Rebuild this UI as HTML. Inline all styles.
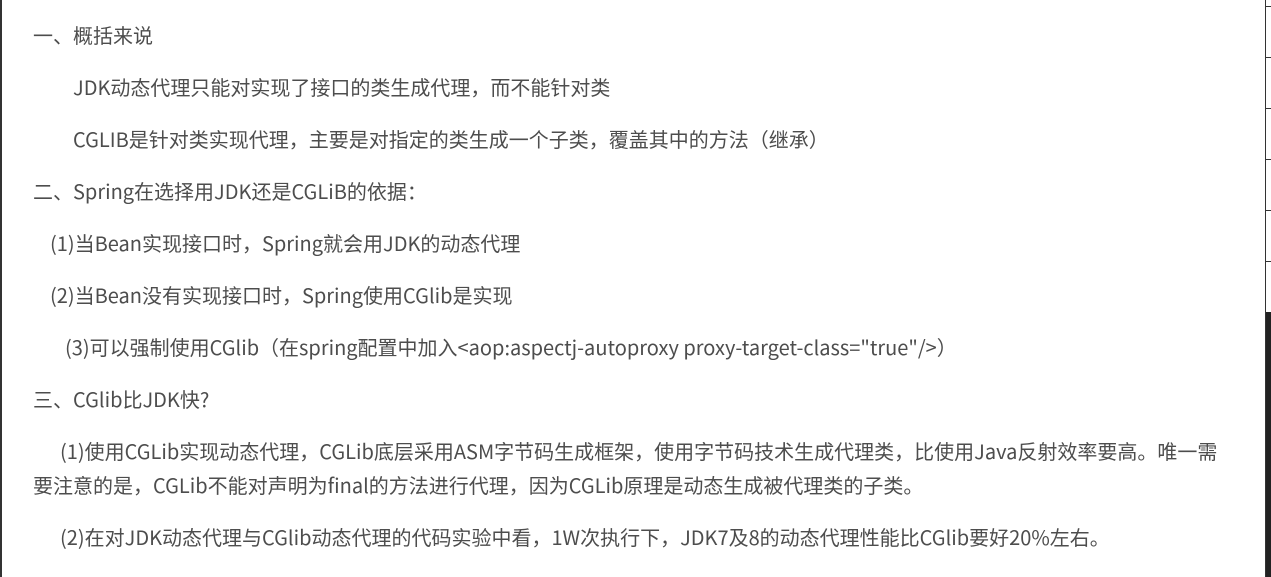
<!DOCTYPE html>
<html><head><meta charset="utf-8"><style>
html,body{margin:0;padding:0;width:1271px;height:577px;overflow:hidden;background:#fff;}
body{position:relative;font-family:"Noto Sans CJK SC",sans-serif;font-size:20px;color:#4d4d4d;}
.l{position:absolute;white-space:nowrap;line-height:24px;}
#lb{position:absolute;left:0;top:0;width:2px;height:577px;background:#333;}
#rb{position:absolute;left:1265px;top:0;width:1px;height:577px;background:#333;}
#rd{position:absolute;left:1266px;top:312px;width:5px;height:265px;background:#222;}
.t{position:absolute;left:1266px;width:5px;height:1px;background:#333;}
</style></head><body>
<div id="lb"></div><div id="rb"></div><div id="rd"></div>
<div class="t" style="top:6px"></div><div class="t" style="top:57px"></div><div class="t" style="top:108px"></div><div class="t" style="top:159px"></div><div class="t" style="top:210px"></div><div class="t" style="top:261px"></div>
<div class="l" style="left:33px;top:23px">一、概括来说</div>
<div class="l" style="left:73px;top:75px">JDK动态代理只能对实现了接口的类生成代理，而不能针对类</div>
<div class="l" style="left:73px;top:127px">CGLIB是针对类实现代理，主要是对指定的类生成一个子类，覆盖其中的方法（继承）</div>
<div class="l" style="left:33px;top:179px">二、Spring在选择用JDK还是CGLiB的依据：</div>
<div class="l" style="left:50px;top:231px">(1)当Bean实现接口时，Spring就会用JDK的动态代理</div>
<div class="l" style="left:50px;top:283px">(2)当Bean没有实现接口时，Spring使用CGlib是实现</div>
<div class="l" style="left:65px;top:335px">(3)可以强制使用CGlib（在spring配置中加入&lt;aop:aspectj-autoproxy proxy-target-class="true"/&gt;）</div>
<div class="l" style="left:33px;top:387px">三、CGlib比JDK快?</div>
<div class="l" style="left:60px;top:439px">(1)使用CGLib实现动态代理，CGLib底层采用ASM字节码生成框架，使用字节码技术生成代理类，比使用Java反射效率要高。唯一需</div>
<div class="l" style="left:33px;top:473px">要注意的是，CGLib不能对声明为final的方法进行代理，因为CGLib原理是动态生成被代理类的子类。</div>
<div class="l" style="left:60px;top:525px">(2)在对JDK动态代理与CGlib动态代理的代码实验中看，1W次执行下，JDK7及8的动态代理性能比CGlib要好20%左右。</div>
</body></html>
